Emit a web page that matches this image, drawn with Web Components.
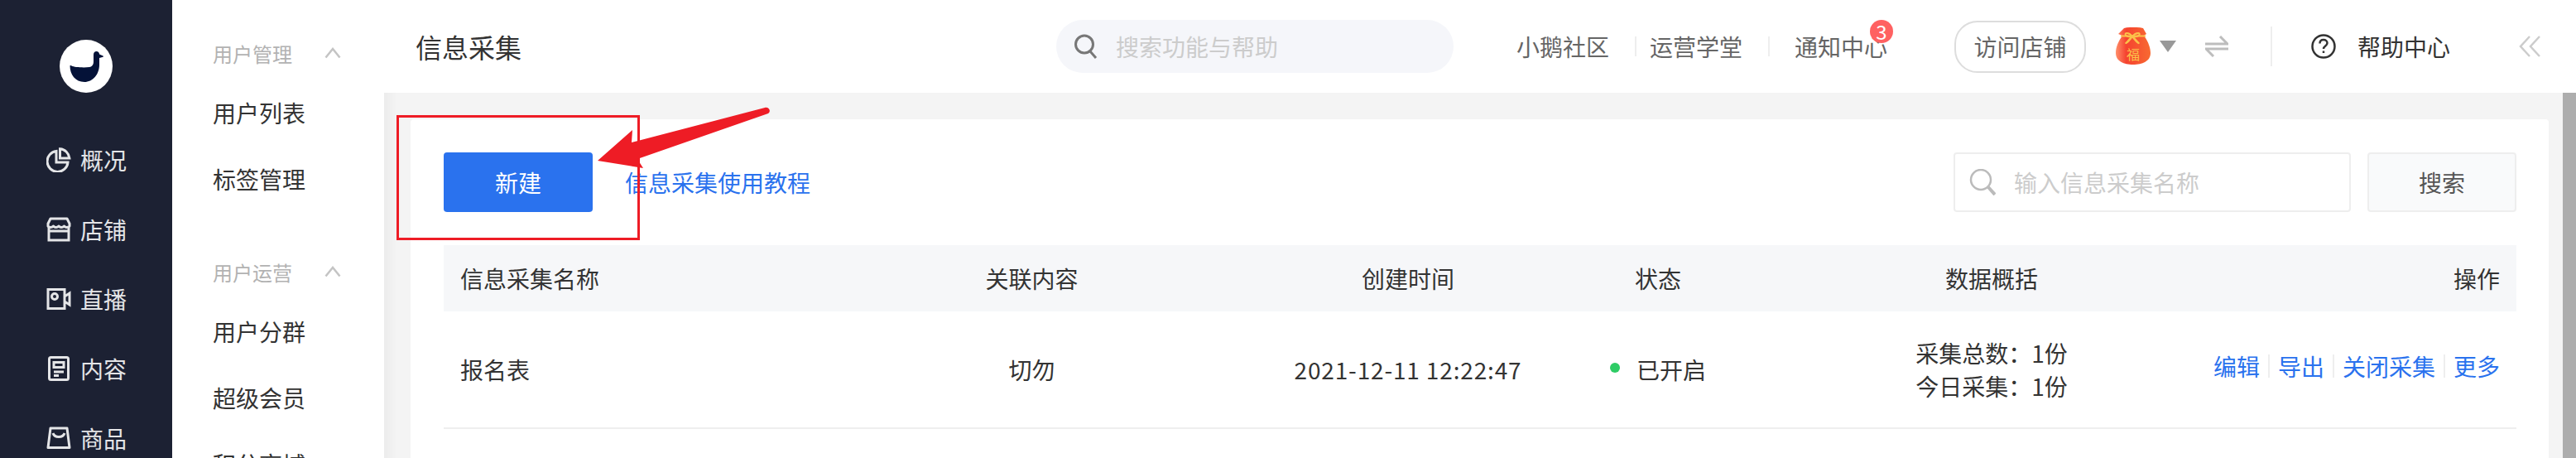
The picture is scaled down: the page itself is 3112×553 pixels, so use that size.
<!DOCTYPE html>
<html>
<head>
<meta charset="utf-8">
<style>
  html, body { margin: 0; height: 100%; overflow: hidden; }
  body { font-family: "Noto Sans CJK SC", "Liberation Sans", sans-serif; font-size: 28px; }
</style>
</head>
<body>
<admin-shell>
  <side-nav slot="nav"></side-nav>
  <sub-nav slot="sub"></sub-nav>
  <top-bar slot="top"></top-bar>
  <form-list slot="main"></form-list>
</admin-shell>

<script>
const FONT = `"Noto Sans CJK SC", "Liberation Sans", sans-serif`;

class AdminShell extends HTMLElement {
    constructor() {
        super();
        this.attachShadow({ mode: 'open' });
        this.shadowRoot.innerHTML = `
            <style>
                :host { display: flex; width: 3112px; height: 553px; overflow: hidden; background: #fff; font-family: ${FONT}; }
                .side { flex: none; }
                .right { flex: 1; min-width: 0; display: flex; flex-direction: column; }
            </style>
            <div class="side"><slot name="nav"></slot></div>
            <div class="side"><slot name="sub"></slot></div>
            <div class="right">
                <slot name="top"></slot>
                <slot name="main"></slot>
            </div>
        `;
    }
}

class SideNav extends HTMLElement {
    constructor() {
        super();
        this.attachShadow({ mode: 'open' });
        const s = 'fill="none" stroke="#e4e5e7" stroke-width="3"';
        const items = [
            ['概况', `<svg width="30" height="30" viewBox="0 0 30 30" ${s}><path d="M12 4.500A12.500 12.500 0 1 0 26 18H12z"/><path d="M16.500 1.800c6 .4 10.600 5 11.400 11.200H16.500z"/></svg>`],
            ['店铺', `<svg width="30" height="30" viewBox="0 0 30 30" ${s}><path d="M5 2h20l3 6v3c-2 2-5 2-6.500 0-2 2-5 2-6.500 0-2 2-5 2-6.500 0-2 2-5 2-6.500 0V8z" stroke-linejoin="round"/><path d="M3 11v17h24V11M3 17h24"/></svg>`],
            ['直播', `<svg width="30" height="30" viewBox="0 0 30 30" ${s}><path d="M2 3.500h20v23H2zM22 12l6-4v14l-6-4"/><circle cx="10" cy="12" r="3.500"/></svg>`],
            ['内容', `<svg width="30" height="30" viewBox="0 0 30 30" ${s}><rect x="3.500" y="1.500" width="23" height="27" rx="2"/><path d="M9 7.500h12v6H9zM9 19h12M9 23.500h6"/></svg>`],
            ['商品', `<svg width="30" height="30" viewBox="0 0 30 30" ${s}><path d="M5 3h20l3 23.500H2z" stroke-linejoin="round"/><path d="M8 9c2 6 12 6 14 0"/></svg>`]
        ];
        this.shadowRoot.innerHTML = `
            <style>
                :host { display: block; width: 208px; height: 553px; background: #1c2133; overflow: hidden; }
                .logo { width: 64px; height: 64px; margin: 48px auto 39px; display: block; }
                .item { height: 84px; display: flex; align-items: center; gap: 11px; padding-left: 56px; color: #e4e5e7; font-size: 28px; line-height: 84px; }
                svg { flex: none; }
            </style>
            <svg class="logo" viewBox="0 0 64 64">
                <circle cx="32" cy="32" r="32" fill="#fff"/>
                <path d="M12.500 31.500c.5-.8 1.500-.3 2.500.3 2 1.200 14 2.200 21 1.200 3.500-.8 5-3 5-7V18c0-2.500 1.500-4 3.500-4s3.500 1.500 3.500 3.500l4.500 2c.5.3.5 1 0 1.200L48 22v8c0 12-8 21-18 21-11 0-17.500-9-17.500-19.500z" fill="#041238"/>
            </svg>
            ${items.map(([t, i]) => `<div class="item">${i}<span>${t}</span></div>`).join('')}
        `;
    }
}

class SubNav extends HTMLElement {
    constructor() {
        super();
        this.attachShadow({ mode: 'open' });
        const chevron = `<svg width="20" height="14" viewBox="0 0 20 14" fill="none" stroke="#c4c4c4" stroke-width="2.500"><path d="M1.500 12.500 10 2l8.500 10.500"/></svg>`;
        this.shadowRoot.innerHTML = `
            <style>
                :host { display: block; width: 256px; height: 553px; background: #fff; overflow: hidden; padding-top: 40px; box-sizing: border-box; }
                .group { height: 48px; display: flex; align-items: center; padding-left: 49px; color: #b2b2b2; font-size: 24px; gap: 39px; }
                .link { height: 80px; display: flex; align-items: center; padding-left: 49px; color: #333; font-size: 28px; }
                .group.second { margin-top: 48px; }
            </style>
            <div class="group"><span>用户管理</span>${chevron}</div>
            <div class="link" style="margin-top:8px">用户列表</div>
            <div class="link">标签管理</div>
            <div class="group second"><span>用户运营</span>${chevron}</div>
            <div class="link" style="margin-top:8px">用户分群</div>
            <div class="link">超级会员</div>
            <div class="link">积分商城</div>
        `;
    }
}

class TopBar extends HTMLElement {
    constructor() {
        super();
        this.attachShadow({ mode: 'open' });
        this.shadowRoot.innerHTML = `
            <style>
                :host { display: flex; align-items: center; height: 112px; flex: none; background: #fff; color: #666; font-size: 28px; position: relative; }
                .title { margin-left: 38px; width: 774px; font-size: 32px; color: #333; }
                .search { width: 480px; height: 64px; border-radius: 32px; background: #f5f6fa; display: flex; align-items: center; padding-left: 21px; box-sizing: border-box; gap: 21px; color: #ccc; }
                .links { margin-left: 76px; display: flex; align-items: center; }
                .links span { position: relative; }
                .sep { width: 2px; height: 24px; background: #eee; margin: 0 30px 0 31px; }
                .sep.first { margin-right: 16px; }
                .badge { position: absolute; left: 91px; top: -12px; width: 28px; height: 28px; border-radius: 50%; background: #ff6161; color: #fff; font-size: 24px; line-height: 28px; text-align: center; font-weight: 400; }
                .visit { margin-left: 81px; width: 159px; height: 63px; border: 2px solid #ddd; border-radius: 28px; box-sizing: border-box; display: flex; align-items: center; justify-content: center; }
                .bag { margin-left: 36px; }
                .caret { margin-left: 11px; width: 0; height: 0; border: 10.500px solid transparent; border-top: 14px solid #999; border-bottom: 0; }
                .swap { margin-left: 35px; }
                .vline { margin-left: 51px; width: 2px; height: 48px; background: #eee; }
                .q { margin-left: 47px; }
                .help { margin-left: 26px; color: #333; }
                .fold { margin-left: 83px; }
            </style>
            <div class="title">信息采集</div>
            <div class="search">
                <svg width="30" height="30" viewBox="0 0 30 30" fill="none" stroke="#777" stroke-width="3"><circle cx="13" cy="12.500" r="10.500"/><path d="M20 21l7 8"/></svg>
                <span>搜索功能与帮助</span>
            </div>
            <div class="links">
                <span>小鹅社区</span><i class="sep first"></i><span>运营学堂</span><i class="sep"></i>
                <span>通知中心<b class="badge">3</b></span>
            </div>
            <div class="visit">访问店铺</div>
            <svg class="bag" width="42" height="46" viewBox="0 0 42 46">
                <defs><linearGradient id="b" x1="0" x2="1" y1="0" y2="0"><stop offset="0" stop-color="#ff8f6a"/><stop offset=".3" stop-color="#f5432f"/><stop offset="1" stop-color="#f86a32"/></linearGradient></defs>
                <path d="M10 1C16-.5 26-.5 33 1l4 7-3 2c6 8 8 16 8 21 0 10-10 14-21 14S0 41 0 31c0-7 3-14 8-21L3 8z" fill="url(#b)"/>
                <path d="M6 10.500h30" stroke="#fbc24a" stroke-width="2"/>
                <path d="M20 11c-5-6-10-4-8-1.500 2 2 6 2.500 8 1.500 5-6 11-4 8-1.500-2 2-6 2.500-8 1.500-4 4-9 9-7.500 8 2-1 5.500-5 7.500-8 4 4 9 9 7.500 8-2-1-5.500-5-7.500-8z" fill="none" stroke="#fbc24a" stroke-width="2"/>
                <text x="21" y="39" font-size="16" fill="#fbc24a" text-anchor="middle" font-family="Noto Sans CJK SC">福</text>
            </svg>
            <i class="caret"></i>
            <svg class="swap" width="28" height="26" viewBox="0 0 28 26" fill="none" stroke="#bdbdbd" stroke-width="3"><path d="M0 10h27L18 1M28 16H1l9 9"/></svg>
            <i class="vline"></i>
            <svg class="q" width="30" height="30" viewBox="0 0 30 30" fill="none" stroke="#333" stroke-width="2.500"><circle cx="15" cy="15" r="13.500"/><path d="M10.500 11.500c0-3 2-4.500 4.500-4.500s4.500 1.800 4.500 4c0 3.500-4.500 3.500-4.500 7"/><path d="M15 20.500v2.500"/></svg>
            <span class="help">帮助中心</span>
            <svg class="fold" width="26" height="26" viewBox="0 0 26 26" fill="none" stroke="#ccc" stroke-width="2.500"><path d="M13 1 2 13l11 12M25 1 14 13l11 12"/></svg>
        `;
    }
}

class FormList extends HTMLElement {
    constructor() {
        super();
        this.attachShadow({ mode: 'open' });
        this.shadowRoot.innerHTML = `
            <style>
                :host { display: block; flex: 1; min-height: 0; position: relative; background: linear-gradient(90deg, #ececec 0, #f4f4f4 16px); padding: 32px 33px 0 32px; overflow: hidden; }
                .scroll { position: absolute; right: 0; top: 0; bottom: 0; width: 16px; background: #adadad; }
                .card { background: #fff; border-radius: 4px 4px 0 0; height: 500px; padding: 40px 39px 0 40px; box-sizing: border-box; position: relative; }
                .tools { display: flex; align-items: center; height: 72px; margin-bottom: 40px; }
                .new { width: 180px; height: 72px; background: #2a72ee; color: #fff; border-radius: 4px; display: flex; align-items: center; justify-content: center; }
                .tutorial { margin-left: 39px; color: #2a72ee; }
                .grow { flex: 1; }
                .kw { width: 480px; height: 72px; border: 2px solid #eee; border-radius: 4px; box-sizing: border-box; display: flex; align-items: center; padding-left: 17px; gap: 22px; color: #ccc; }
                .go { margin-left: 20px; width: 180px; height: 72px; border: 2px solid #eee; border-radius: 4px; background: #f9fafb; color: #555; box-sizing: border-box; display: flex; align-items: center; justify-content: center; }
                .row { display: grid; grid-template-columns: 462px 497px 412px 293px 412px 428px; align-items: center; color: #333; }
                .head { height: 80px; background: #f6f7f9; }
                .body { height: 140px; border-bottom: 2px solid #eee; }
                .c { text-align: center; }
                .l { padding-left: 20px; }
                .st { padding-left: 70px; position: relative; }
                .head .st { padding-left: 68px; }
                .dot { position: absolute; left: 38px; top: 50%; width: 12px; height: 12px; margin-top: -8px; border-radius: 50%; background: #2ecc65; }
                .r { text-align: right; padding-right: 20px; }
                .sum { line-height: 40px; }
                .ops { display: flex; justify-content: flex-end; align-items: center; padding-right: 20px; color: #2a72ee; margin-top: -8px; }
                .ops i { width: 2px; height: 28px; background: #eee; margin: 0 10px; }
                .date { letter-spacing: .85px; }
                .box { position: absolute; left: -17px; top: -5px; width: 294px; height: 151px; border: 3px solid #ee1c25; box-sizing: border-box; pointer-events: none; }
                .arrow { position: absolute; left: 220px; top: -20px; pointer-events: none; }
            </style>
            <div class="scroll"></div>
            <div class="card">
                <div class="tools">
                    <div class="new">新建</div>
                    <div class="tutorial">信息采集使用教程</div>
                    <div class="grow"></div>
                    <div class="kw">
                        <svg width="32" height="32" viewBox="0 0 32 32" fill="none" stroke="#bbb" stroke-width="2.500"><circle cx="14" cy="13" r="12"/><path d="M23 22l8 9" stroke-width="4"/></svg>
                        <span>输入信息采集名称</span>
                    </div>
                    <div class="go">搜索</div>
                </div>
                <div class="row head">
                    <div class="l">信息采集名称</div><div class="c">关联内容</div><div class="c">创建时间</div><div class="st">状态</div><div class="c">数据概括</div><div class="r">操作</div>
                </div>
                <div class="row body">
                    <div class="l">报名表</div><div class="c">切勿</div><div class="c date">2021-12-11 12:22:47</div>
                    <div class="st"><span class="dot"></span>已开启</div>
                    <div class="c sum">采集总数：1份<br>今日采集：1份</div>
                    <div class="ops"><span>编辑</span><i></i><span>导出</span><i></i><span>关闭采集</span><i></i><span>更多</span></div>
                </div>
                <div class="box"></div>
                <svg class="arrow" width="240" height="90" viewBox="0 0 240 90">
                    <path d="M6 70 48 33 47 48 208 6c5-1 8 4 4 7L54 68l7 11z" fill="#ee1c25"/>
                </svg>
            </div>
        `;
    }
}

customElements.define('admin-shell', AdminShell);
customElements.define('side-nav', SideNav);
customElements.define('sub-nav', SubNav);
customElements.define('top-bar', TopBar);
customElements.define('form-list', FormList);
</script>
</body>
</html>
